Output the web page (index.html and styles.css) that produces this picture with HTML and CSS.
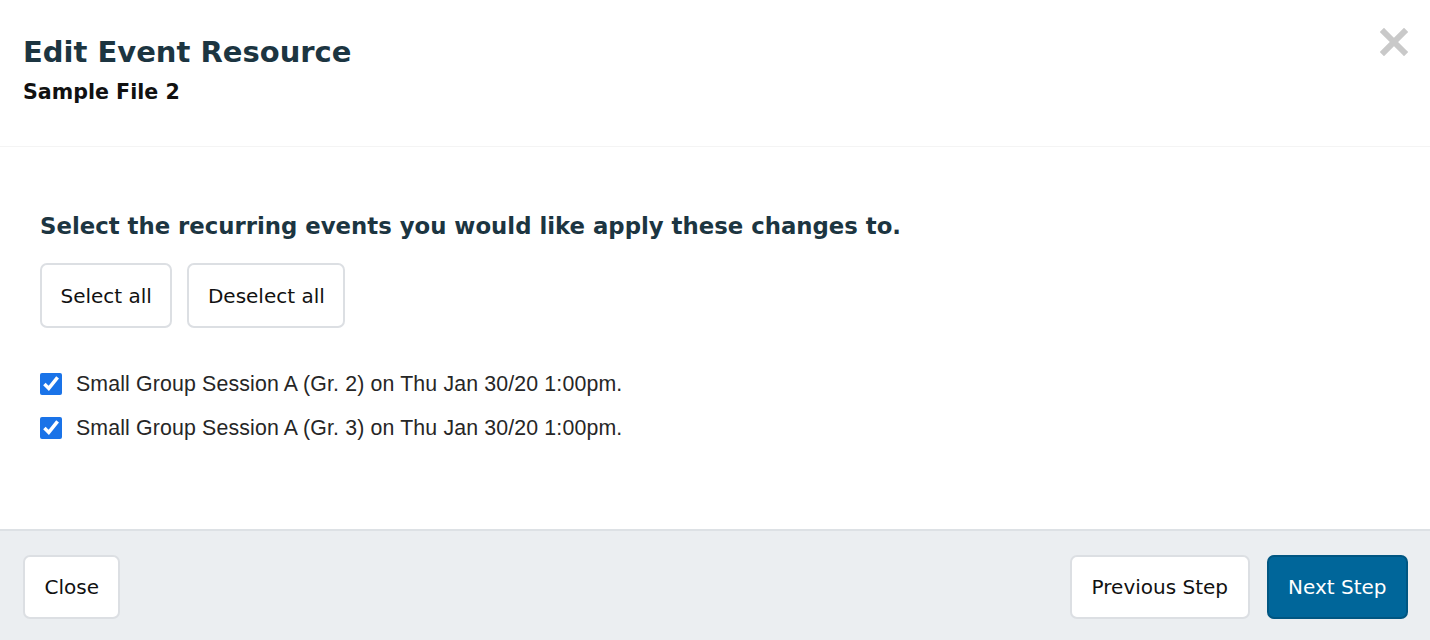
FILE: index.html
```html
<!DOCTYPE html>
<html lang="en">

<head>
    <meta charset="UTF-8">
    <meta name="viewport" content="width=device-width, initial-scale=1.0">
    <title>Edit Event Resource</title>
    <link rel="stylesheet" href="styles.css">
</head>

<body>
    <div class="modal">
        <div class="modal-header">
            <div class="titles">
                <h1 class="title">Edit Event Resource</h1>
                <h2 class="subtitle">Sample File 2</h2>
            </div>
            <a href="javascript:void(0);" class="close-x" aria-label="Close">
                <svg width="28" height="28" viewBox="0 0 28 28">
                    <path d="M4 4 L24 24 M24 4 L4 24" stroke="#c9c9c9" stroke-width="6" stroke-linecap="square" />
                </svg>
            </a>
        </div>

        <div class="modal-body">
            <h3 class="prompt">Select the recurring events you would like apply these changes to.</h3>
            <div class="btn-row">
                <button class="btn">Select all</button>
                <button class="btn">Deselect all</button>
            </div>
            <ul class="event-list">
                <li><label><input type="checkbox" checked><span>Small Group Session A (Gr. 2) on Thu Jan 30/20 1:00pm.</span></label></li>
                <li><label><input type="checkbox" checked><span>Small Group Session A (Gr. 3) on Thu Jan 30/20 1:00pm.</span></label></li>
            </ul>
        </div>

        <div class="modal-footer">
            <button class="btn">Close</button>
            <div class="footer-right">
                <button class="btn">Previous Step</button>
                <button class="btn btn-primary">Next Step</button>
            </div>
        </div>
    </div>
</body>

</html>
```

FILE: styles.css
```css
html,
body {
    margin: 0;
    padding: 0;
    height: 100%;
}

body {
    font-family: "DejaVu Sans", sans-serif;
    background: #fff;
}

.modal {
    height: 640px;
    display: flex;
    flex-direction: column;
}

/* 头部 */
.modal-header {
    display: flex;
    justify-content: space-between;
    align-items: flex-start;
    height: 147px;
    box-sizing: border-box;
    padding: 32px 22px 0 23px;
    border-bottom: 1px solid #f4f4f4;
}

.title {
    margin: 0;
    font-size: 29px;
    line-height: 40px;
    font-weight: bold;
    color: #1c3541;
}

.subtitle {
    margin: 6px 0 0;
    font-size: 20.6px;
    line-height: 28px;
    font-weight: bold;
    color: #111;
}

.close-x {
    display: block;
    margin-top: -4px;
}

.close-x svg {
    display: block;
}

/* 主体 */
.modal-body {
    flex: 1;
    padding: 62px 40px 0;
}

.prompt {
    margin: 0;
    font-size: 22.8px;
    line-height: 34px;
    font-weight: bold;
    color: #1c3541;
}

.btn-row {
    display: flex;
    gap: 15px;
    margin-top: 20px;
}

.btn {
    font-family: "DejaVu Sans", sans-serif;
    font-size: 20px;
    color: #111;
    background: #fff;
    border: 2px solid #dcdfe3;
    border-radius: 7px;
    height: 65px;
    padding: 0 18.5px;
    cursor: pointer;
}

.event-list {
    list-style: none;
    margin: 34px 0 0;
    padding: 0;
}

.event-list li {
    height: 44px;
    display: flex;
    align-items: center;
}

.event-list label {
    display: flex;
    align-items: center;
    gap: 14px;
    font-family: "Liberation Sans", Arial, sans-serif;
    font-size: 21.3px;
    letter-spacing: 0.15px;
    color: #262626;
}

.event-list input {
    width: 22px;
    height: 22px;
    margin: 0;
    accent-color: #1a73e8;
}

/* 底部 */
.modal-footer {
    height: 111px;
    box-sizing: border-box;
    background: #ebeef1;
    border-top: 2px solid #dde1e5;
    display: flex;
    justify-content: space-between;
    padding: 24px 22px 0 23px;
}

.modal-footer .btn {
    height: 64px;
    padding: 0 19.5px;
}

.footer-right {
    display: flex;
    gap: 17px;
}

.btn-primary {
    background: #00669a;
    border-color: #005682;
    color: #fff;
}
```
